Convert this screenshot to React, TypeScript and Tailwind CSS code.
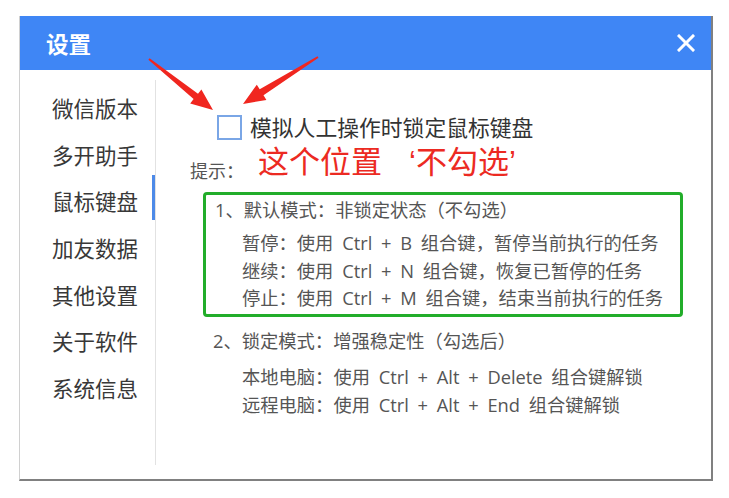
import React from "react";

const navItems = ["微信版本", "多开助手", "鼠标键盘", "加友数据", "其他设置", "关于软件", "系统信息"];

function Arrows() {
  return (
    <svg
      className="absolute left-0 top-0 pointer-events-none"
      width="729"
      height="498"
      viewBox="0 0 729 498"
    >
      <polygon
        fill="#f0261f"
        points="148.4,59.8 149.6,58.2 198,93.7 201.4,89.4 213,110 190.2,103.4 193.6,99.1"
      />
      <polygon
        fill="#f0261f"
        points="318.5,57.8 317.5,56.2 259.7,89.3 256.8,84.7 243,104 266.4,99.9 263.5,95.3"
      />
    </svg>
  );
}

export default function App() {
  return (
    <div className="relative w-[729px] h-[498px] bg-white font-['Noto_Sans_CJK_SC',sans-serif] overflow-hidden">
      <div className="pt-[16px] pl-[19px]">
        <div className="w-[694px] h-[465px] flex flex-col bg-white border-l border-l-[#d0d0d0] border-r-2 border-r-[#808080] border-b-2 border-b-[#808080]">
          <div className="h-[54px] shrink-0 bg-[#3f86f5] flex items-center justify-between pl-[26px] pr-[16px]">
            <span className="text-white text-[22.5px] font-bold leading-none">设置</span>
            <svg width="18" height="18" viewBox="0 0 18 18">
              <path d="M2 2 L16 16 M16 2 L2 16" stroke="white" strokeWidth="3" strokeLinecap="square" />
            </svg>
          </div>
          <div className="flex flex-1">
            <div className="w-[132px] pt-[14.5px] pl-[32px] flex flex-col">
              {navItems.map((t) => (
                <div key={t} className="h-[46.67px] flex items-center text-[21.5px] text-[#383838] leading-none">
                  {t}
                </div>
              ))}
            </div>
            <div className="w-[3px] flex flex-col">
              <div className="h-[105px]" />
              <div className="h-[45px] bg-[#4d8ae8]" />
            </div>
            <div className="w-[1px] mt-[10px] mb-[14px] bg-[#e2e2e2]" />
            <div className="flex-1 flex flex-col">
              <div className="mt-[43px] ml-[61px] h-[28px] flex items-center">
                <div className="w-[25px] h-[25px] border-2 border-[#7aa6e6] bg-white" />
                <span className="ml-[8px] text-[21.8px] text-[#333] leading-none">模拟人工操作时锁定鼠标键盘</span>
              </div>
              <div className="mt-[5px] ml-[34px] flex items-end">
                <span className="w-[68px] text-[18px] leading-[20px] text-[#555]">提示：</span>
                <span className="text-[31px] leading-[34px] text-[#ec2a22] font-['Liberation_Sans','Noto_Sans_CJK_SC',sans-serif]">
                  这个位置<span className="ml-[27px]">‘不勾选’</span>
                </span>
              </div>
              <div className="mt-[12px] ml-[47px] w-[480px] h-[125px] border-[3px] border-[#22ad2a] rounded-[4px] pt-[3px] pl-[9px] text-[18.3px] text-[#555] [word-spacing:4px] font-['Open_Sans','Noto_Sans_CJK_SC',sans-serif]">
                <div className="leading-[24px]">1、默认模式：非锁定状态（不勾选）</div>
                <div className="mt-[7px] pl-[27px] leading-[27.5px]">
                  <div>暂停：使用 Ctrl + B 组合键，暂停当前执行的任务</div>
                  <div>继续：使用 Ctrl + N 组合键，恢复已暂停的任务</div>
                  <div>停止：使用 Ctrl + M 组合键，结束当前执行的任务</div>
                </div>
              </div>
              <div className="mt-[12px] ml-[57px] text-[18.3px] text-[#555] [word-spacing:4px] font-['Open_Sans','Noto_Sans_CJK_SC',sans-serif]">
                <div className="leading-[24px]">2、锁定模式：增强稳定性（勾选后）</div>
                <div className="mt-[10px] pl-[29px] leading-[28px]">
                  <div>本地电脑：使用 Ctrl + Alt + Delete 组合键解锁</div>
                  <div>远程电脑：使用 Ctrl + Alt + End 组合键解锁</div>
                </div>
              </div>
            </div>
          </div>
        </div>
      </div>
      <Arrows />
    </div>
  );
}
